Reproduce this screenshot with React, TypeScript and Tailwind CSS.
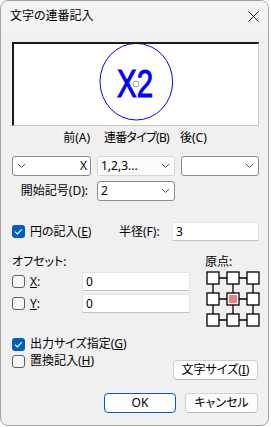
import type { ReactNode } from "react";

const font = "font-['Noto_Sans','Noto_Sans_CJK_JP',sans-serif] [font-feature-settings:'palt']";

function Chevron() {
  return (
    <svg width="9" height="6" viewBox="0 0 9 6" className="shrink-0">
      <path d="M0.8 0.8 L4.5 4.5 L8.2 0.8" fill="none" stroke="#5a5a5a" strokeWidth="1" />
    </svg>
  );
}

function CheckBox({ checked }: { checked?: boolean }) {
  if (checked) {
    return (
      <span className="flex h-[13px] w-[13px] shrink-0 items-center justify-center rounded-[3px] bg-[#005fb8]">
        <svg width="9" height="7" viewBox="0 0 9 7">
          <path d="M1 3.6 L3.4 6 L8 1.2" fill="none" stroke="#fff" strokeWidth="1.1" />
        </svg>
      </span>
    );
  }
  return <span className="h-[13px] w-[13px] shrink-0 rounded-[3px] border border-[#5f5f5f] bg-[#f7f7f7]" />;
}

function Combo({ children, light, className = "" }: { children?: ReactNode; light?: boolean; className?: string }) {
  return (
    <div
      className={`flex h-[20px] w-[78px] items-center rounded-[3px] border ${
        light ? "border-[#d4d4d4] bg-[#fbfbfb]" : "border-[#8b8b8b] bg-white"
      } ${className}`}
    >
      {children}
    </div>
  );
}

function Edit({ value, className = "" }: { value: string; className?: string }) {
  return (
    <div
      className={`flex h-[19px] items-center border border-[#e2e2e2] border-b-[#c4c4c4] bg-white pl-[3px] text-[12px] leading-none ${className}`}
    >
      {value}
    </div>
  );
}

function Button({ children, primary, className = "" }: { children: ReactNode; primary?: boolean; className?: string }) {
  return (
    <div
      className={`flex h-[20px] items-center justify-center whitespace-nowrap rounded-[4px] border bg-[#fdfdfd] text-[12px] leading-none ${
        primary ? "border-[#005fb8]" : "border-[#d0d0d0] border-b-[#b8b8b8]"
      } ${className}`}
    >
      {children}
    </div>
  );
}

function OriginGrid() {
  const xs = [2, 22, 42];
  const ys = [2, 23, 44];
  return (
    <svg width="56" height="58" viewBox="0 0 56 58">
      {ys.map((y) => (
        <line key={"h" + y} x1="8" y1={y + 6} x2="48" y2={y + 6} stroke="#000" strokeWidth="1.3" />
      ))}
      {xs.map((x) => (
        <line key={"v" + x} x1={x + 6} y1="8" x2={x + 6} y2="50" stroke="#000" strokeWidth="1.3" />
      ))}
      {ys.map((y) =>
        xs.map((x) => (
          <rect key={x + "-" + y} x={x} y={y} width="12" height="12" fill="#fff" stroke="#000" strokeWidth="1.3" />
        ))
      )}
      <rect x="24" y="25" width="8" height="8" fill="#f08080" />
    </svg>
  );
}

export default function App() {
  return (
    <div className={`h-[427px] w-[271px] bg-white text-black ${font}`}>
      <div className="h-[426px] w-[269px] overflow-hidden rounded-[8px] border border-[#a3a3a3] bg-[#f0f0f0]">
        {/* タイトルバー */}
        <div className="flex h-[30px] items-center justify-between bg-[#f3f3f3] pl-[9px] pr-[8px]">
          <span className="text-[12px] leading-none">文字の連番記入</span>
          <svg width="11" height="11" viewBox="0 0 11 11" className="mr-[1px]">
            <path d="M0.5 0.5 L10.5 10.5 M10.5 0.5 L0.5 10.5" stroke="#1a1a1a" strokeWidth="1" />
          </svg>
        </div>

        <div className="w-[258px] whitespace-nowrap pl-[11px] text-[12px]">
          {/* プレビュー */}
          <div className="mt-[11px] h-[84px] w-[247px] border-b border-l-2 border-r border-t-2 border-b-[#c8c8c8] border-l-[#1a1a1a] border-r-[#c8c8c8] border-t-[#1a1a1a] bg-white">
            <svg width="244" height="81" viewBox="0 0 244 81">
              <ellipse cx="122.3" cy="37.7" rx="36.3" ry="38.3" fill="none" stroke="#0000ff" strokeWidth="1" />
              <text
                x="103"
                y="53"
                fontSize="39.5"
                fill="#0000ff"
                stroke="#0000ff"
                strokeWidth="1.1"
                textLength="36"
                lengthAdjust="spacingAndGlyphs"
                fontFamily="'Liberation Sans', Arial, sans-serif"
              >
                X2
              </text>
              <circle cx="122" cy="40" r="3" fill="#fff" stroke="#a0a0a0" strokeWidth="1" />
            </svg>
          </div>

          {/* 見出し */}
          <div className="mt-[4px] flex h-[16px] items-center gap-[6px] leading-none">
            <div className="w-[79px] shrink-0 pr-[1px] text-right">前(A)</div>
            <div className="w-[78px] shrink-0 pl-[7px] tracking-[-0.8px]">連番タイプ(B)</div>
            <div className="-ml-[1px] w-[78px] shrink-0">後(C)</div>
          </div>

          {/* コンボ */}
          <div className="mt-[10px] flex gap-[6px]">
            <Combo className="w-[79px] justify-between pl-[4px] pr-[3px]">
              <Chevron />
              <span className="leading-none">X</span>
            </Combo>
            <Combo light className="justify-between pl-[3px] pr-[4px]">
              <span className="leading-none">1,2,3...</span>
              <Chevron />
            </Combo>
            <Combo className="justify-end pr-[4px]">
              <Chevron />
            </Combo>
          </div>

          <div className="mt-[5px] flex items-center gap-[6px]">
            <div className="w-[79px] pr-[3px] text-right leading-none">開始記号(D):</div>
            <Combo className="justify-between pl-[3px] pr-[4px]">
              <span className="leading-none">2</span>
              <Chevron />
            </Combo>
          </div>

          {/* 円の記入 */}
          <div className="mt-[21px] flex h-[19px] items-center">
            <div className="flex w-[107px] items-center gap-[5px]">
              <CheckBox checked />
              <span className="leading-none">
                円の記入(<span className="underline">E</span>)
              </span>
            </div>
            <div className="w-[53px] leading-none">半径(F):</div>
            <Edit value="3" className="w-[87px]" />
          </div>

          {/* オフセット / 原点 */}
          <div className="mt-[14px] flex">
            <div className="w-[178px]">
              <div className="h-[14px] leading-[14px]">オフセット:</div>
              <div className="mt-[3px] flex h-[19px] items-center">
                <CheckBox />
                <span className="ml-[5px] w-[52px] leading-none">
                  <span className="underline">X</span>:
                </span>
                <Edit value="0" className="w-[108px]" />
              </div>
              <div className="mt-[3px] flex h-[19px] items-center">
                <CheckBox />
                <span className="ml-[5px] w-[52px] leading-none">
                  <span className="underline">Y</span>:
                </span>
                <Edit value="0" className="w-[108px]" />
              </div>
            </div>
            <div className="ml-[15px] w-[56px]">
              <div className="h-[14px] leading-[14px]">原点:</div>
              <div className="mt-[1px]">
                <OriginGrid />
              </div>
            </div>
          </div>

          {/* 出力サイズ / 置換 */}
          <div className="mt-[9px] flex justify-between">
            <div>
              <div className="flex h-[14px] items-center gap-[5px]">
                <CheckBox checked />
                <span className="leading-none">
                  出力サイズ指定(<span className="underline">G</span>)
                </span>
              </div>
              <div className="mt-[3px] flex h-[14px] items-center gap-[5px]">
                <CheckBox />
                <span className="leading-none">
                  置換記入(<span className="underline">H</span>)
                </span>
              </div>
            </div>
            <Button className="mr-[1px] mt-[23px] w-[85px]">
              文字サイズ(<span className="underline">I</span>)
            </Button>
          </div>

          <div className="mt-[13px] flex justify-end gap-[9px] pr-[1px]">
            <Button primary className="w-[72px]">
              OK
            </Button>
            <Button className="w-[73px]">キャンセル</Button>
          </div>
        </div>
      </div>
    </div>
  );
}
